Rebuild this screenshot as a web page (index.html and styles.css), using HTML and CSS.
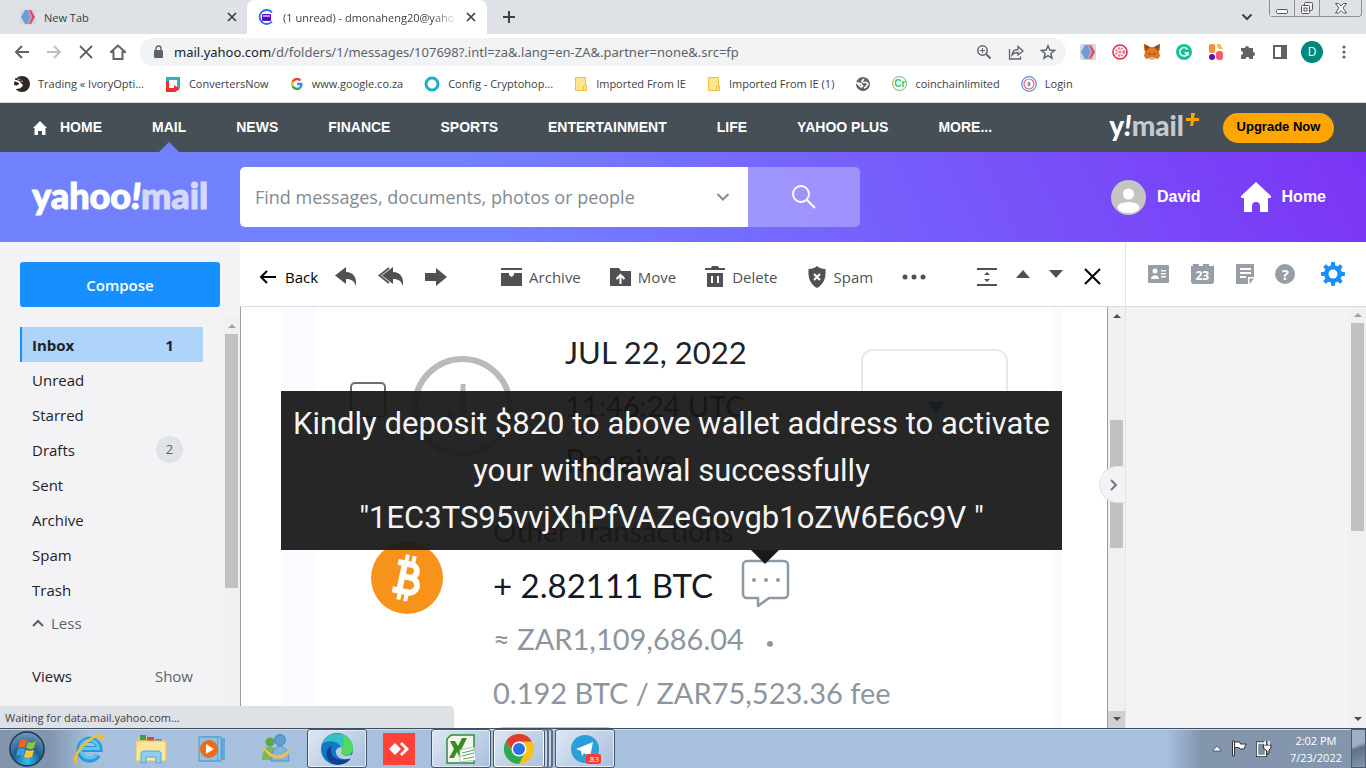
FILE: index.html
```html
<!DOCTYPE html>
<html lang="en">
<head>
  <meta charset="UTF-8" />
  <meta name="viewport" content="width=device-width, initial-scale=1.0"/>
  <title>(1 unread) - Yahoo Mail</title>
  <link rel="stylesheet" href="styles.css">
</head>
<body>

  <!-- Browser tabs -->
  <div class="tab-strip">
    <div class="tab">
      <svg width="16" height="16" viewBox="0 0 16 16"><rect width="16" height="16" rx="2" fill="#d3d8de"/><path d="M5 1h4l3 7-3 7H5L1 8z" fill="#6f9bd1"/><path d="M9 1h2l4 7-4 7H9l3-7z" fill="#e4485c"/><path d="M7 1h2l3 7-3 7H7l3-7z" fill="#b5a0c0"/></svg>
      <span class="tab-title">New Tab</span>
      <button class="plain" aria-label="Close tab"><svg width="10" height="10" viewBox="0 0 10 10"><path d="M1 1l8 8M9 1L1 9" stroke="#3c4043" stroke-width="1.7"/></svg></button>
    </div>
    <div class="tab tab-active">
      <svg width="16" height="16" viewBox="0 0 16 16"><path d="M14 3.500A7 7 0 1 0 14 12.500" fill="none" stroke="#1a73e8" stroke-width="1.800"/><rect x="4" y="5" width="9" height="7" rx="1" fill="#5f01d1"/><path d="M5 7h7" stroke="#fff" stroke-width="1.200"/></svg>
      <span class="tab-title">(1 unread) - dmonaheng20@yaho</span>
      <button class="plain" aria-label="Close tab"><svg width="10" height="10" viewBox="0 0 10 10"><path d="M1 1l8 8M9 1L1 9" stroke="#3c4043" stroke-width="1.7"/></svg></button>
    </div>
    <button class="plain new-tab" aria-label="New tab"><svg width="14" height="14" viewBox="0 0 14 14"><path d="M7 1v12M1 7h12" stroke="#3c4043" stroke-width="2"/></svg></button>
    <button class="plain tab-search" aria-label="Search tabs"><svg width="12" height="8" viewBox="0 0 12 8"><path d="M1.500 1.500L6 6l4.500-4.500" fill="none" stroke="#3c4043" stroke-width="2"/></svg></button>
    <div class="window-buttons">
      <button aria-label="Minimize"><svg width="14" height="14" viewBox="0 0 14 14"><rect x="1.500" y="8.500" width="11" height="4" rx="1" fill="#fff" stroke="#555"/></svg></button>
      <button aria-label="Restore"><svg width="14" height="14" viewBox="0 0 14 14"><rect x="4.500" y="1.500" width="8" height="8" rx="1" fill="#eee" stroke="#555"/><rect x="1.500" y="4.500" width="8" height="8" rx="1" fill="#fff" stroke="#555"/><rect x="4" y="7" width="3" height="3" fill="none" stroke="#555"/></svg></button>
      <button class="win-close" aria-label="Close"><svg width="14" height="14" viewBox="0 0 14 14"><path d="M1.500 2.500h3L7 5l2.500-2.500h3L9 7l3.500 5h-3L7 9.500 4.500 12h-3L5 7z" fill="#fff" stroke="#555"/></svg></button>
    </div>
  </div>

  <!-- Address bar -->
  <div class="toolbar">
    <div class="nav-buttons">
      <button class="plain" aria-label="Back"><svg width="16" height="16" viewBox="0 0 16 16"><path d="M15 8H2M8 2L2 8l6 6" fill="none" stroke="#5f6368" stroke-width="2"/></svg></button>
      <button class="plain" aria-label="Forward"><svg width="16" height="16" viewBox="0 0 16 16"><path d="M1 8h13M8 2l6 6-6 6" fill="none" stroke="#bdc1c6" stroke-width="2"/></svg></button>
      <button class="plain" aria-label="Stop"><svg width="16" height="16" viewBox="0 0 16 16"><path d="M2 2l12 12M14 2L2 14" stroke="#5f6368" stroke-width="1.800"/></svg></button>
      <button class="plain" aria-label="Home"><svg width="16" height="16" viewBox="0 0 16 16"><path d="M8 1.500L1 8h2.500v7h9V8H15z" fill="none" stroke="#5f6368" stroke-width="2"/></svg></button>
    </div>
    <div class="omnibox">
      <svg width="10" height="14" viewBox="0 0 10 14"><rect x="1" y="5" width="9" height="8" rx="1" fill="#5f6368"/><path d="M3 6V3.500a2.500 2.500 0 0 1 5 0V6" fill="none" stroke="#5f6368" stroke-width="1.400"/></svg>
      <span class="url"><b>mail.yahoo.com</b>/d/folders/1/messages/107698?.intl=za&amp;.lang=en-ZA&amp;.partner=none&amp;.src=fp</span>
      <button class="plain" aria-label="Zoom"><svg width="16" height="16" viewBox="0 0 16 16"><circle cx="6.500" cy="6.500" r="4.700" fill="none" stroke="#5f6368" stroke-width="1.500"/><path d="M10 10l4.500 4.500" stroke="#5f6368" stroke-width="1.800"/><path d="M6.500 4v5M4 6.500h5" stroke="#5f6368"/></svg></button>
      <button class="plain" aria-label="Share"><svg width="16" height="16" viewBox="0 0 16 16"><path d="M1.500 5v10h11v-2.500" fill="none" stroke="#5f6368" stroke-width="1.300"/><path d="M4 11c.5-4 2.500-5.500 6-5.500V2.500L15 7l-5 4V8.500C7 8.500 5.500 9 4 11z" fill="none" stroke="#5f6368" stroke-width="1.300"/></svg></button>
      <button class="plain" aria-label="Bookmark"><svg width="16" height="16" viewBox="0 0 16 16"><path d="M8 1.800l1.800 4.300 4.700.4-3.600 3 1.100 4.600L8 11.700 4 14.100l1.100-4.600-3.600-3 4.700-.4z" fill="none" stroke="#5f6368" stroke-width="1.500"/></svg></button>
    </div>
    <div class="extensions">
      <button class="plain" aria-label="Extension"><svg width="16" height="16" viewBox="0 0 16 16"><rect width="16" height="16" rx="2" fill="#d3d8de"/><path d="M5 1h4l3 7-3 7H5L1 8z" fill="#6f9bd1"/><path d="M9 1h2l4 7-4 7H9l3-7z" fill="#e4485c"/><path d="M7 1h2l3 7-3 7H7l3-7z" fill="#b5a0c0"/></svg></button>
      <button class="plain" aria-label="Extension"><svg width="16" height="16" viewBox="0 0 16 16"><circle cx="8" cy="8" r="7" fill="#fff" stroke="#e8264f" stroke-width="1.600"/><circle cx="8" cy="8" r="4" fill="none" stroke="#ef6b86" stroke-width="1.800" stroke-dasharray="2 1.200"/><path d="M8 5v6M5 8h6" stroke="#ef6b86"/></svg></button>
      <button class="plain" aria-label="MetaMask"><svg width="16" height="16" viewBox="0 0 16 16"><path d="M0 0l6 3h4l6-3v5l-1 3 1 4-2 3-3-1-2 2H7l-2-2-3 1-2-3 1-4-1-3z" fill="#e2761b"/><path d="M0 0l6 3-4 4zM16 0l-6 3 4 4z" fill="#8c4a1c"/><path d="M6 13h4l-1 3H7z" fill="#c9c3bd"/><path d="M4 9l3 1-1 1zM12 9l-3 1 1 1z" fill="#2b3a49"/></svg></button>
      <button class="plain" aria-label="Grammarly"><svg width="16" height="16" viewBox="0 0 16 16"><circle cx="8" cy="8" r="8" fill="#15c39a"/><path d="M11.500 5.500A4.200 4.200 0 1 0 12 9H8.500M12 9v2.500" fill="none" stroke="#fff" stroke-width="1.500"/></svg></button>
      <button class="plain" aria-label="Extension"><svg width="16" height="16" viewBox="0 0 16 16"><rect x="1" y="0" width="6" height="9" rx="2" fill="#ff8a3c"/><path d="M9 0h3l3 5h-3a3 3 0 0 1-3-3z" fill="#fdc13c"/><circle cx="4" cy="13" r="3" fill="#5a0fc0"/><rect x="8" y="7" width="7" height="9" rx="3" fill="#f45b69"/></svg></button>
      <button class="plain" aria-label="Extensions"><svg width="16" height="16" viewBox="0 0 16 16"><path d="M1 4h4a2 2 0 1 1 4 0h4v4a2 2 0 1 1 0 4v3H9.500a2 2 0 0 0-4 0H1v-4a2 2 0 0 0 0-4z" fill="#5f6368"/></svg></button>
      <button class="plain" aria-label="Side panel"><svg width="16" height="16" viewBox="0 0 16 16"><rect x="2" y="2" width="12" height="12" fill="#fff" stroke="#5f6368" stroke-width="2"/><rect x="9" y="2" width="5" height="12" fill="#5f6368"/></svg></button>
      <button class="avatar" aria-label="Profile">D</button>
      <button class="plain" aria-label="Menu"><svg width="16" height="16" viewBox="0 0 16 16"><g fill="#5f6368"><circle cx="8" cy="3" r="1.600"/><circle cx="8" cy="8" r="1.600"/><circle cx="8" cy="13" r="1.600"/></g></svg></button>
    </div>
  </div>

  <!-- Bookmarks -->
  <div class="bookmarks">
    <a href="#"><svg width="16" height="16" viewBox="0 0 16 16"><circle cx="8" cy="8" r="8" fill="#33261f"/><path d="M0 3c4-2 8 0 9 3l-4-1 4 4c-1 3-4 4-7 4H0V9c3 1 5 0 5-2L0 5z" fill="#fff"/><path d="M1 3c3-1 6 0 7 2L4 4zM7 12c3 0 5-2 5-5" fill="none" stroke="#33261f"/></svg>Trading « IvoryOpti...</a>
    <a href="#"><svg width="16" height="16" viewBox="0 0 16 16"><path d="M1 1h14v11h-3V4H4v5H1z" fill="#2eb1c2"/><path d="M1 5h3v7h5V9l6 4-5 3H1z" fill="#ee2e31"/></svg>ConvertersNow</a>
    <a href="#"><svg width="14" height="14" viewBox="0 0 16 16" fill="none" stroke-width="2.800"><path d="M12 4A5.500 5.500 0 0 0 3 5.500" stroke="#ea4335"/><path d="M3 5.500a5.500 5.500 0 0 0 0 5" stroke="#fbbc05"/><path d="M3 10.500a5.500 5.500 0 0 0 8.500 1.800" stroke="#34a853"/><path d="M11.500 12.300A5 5 0 0 0 13 8H8" stroke="#4285f4"/></svg>www.google.co.za</a>
    <a href="#"><svg width="16" height="16" viewBox="0 0 16 16"><circle cx="8" cy="8" r="6" fill="none" stroke="#14b1c4" stroke-width="3"/></svg>Config - Cryptohop...</a>
    <a href="#"><svg width="14" height="16" viewBox="0 0 14 16"><path d="M1.500 1.500h10v8h1v5h-11z" fill="#ffe58e" stroke="#e9c044"/><path d="M9.500 14v-4h2" fill="none" stroke="#e9c044"/></svg>Imported From IE</a>
    <a href="#"><svg width="14" height="16" viewBox="0 0 14 16"><path d="M1.500 1.500h10v8h1v5h-11z" fill="#ffe58e" stroke="#e9c044"/><path d="M9.500 14v-4h2" fill="none" stroke="#e9c044"/></svg>Imported From IE (1)</a>
    <a href="#" aria-label="Site"><svg width="16" height="16" viewBox="0 0 16 16"><circle cx="8" cy="8" r="7" fill="#5f6368"/><path d="M2 7l4 .5L7.500 10 6 11zM9 3L7 5l1.500 1.500h3L13 8l-2 3-2 1" fill="none" stroke="#fff" stroke-width="1.600"/></svg></a>
    <a href="#"><span class="badge-cr">Cr</span>coinchainlimited</a>
    <a href="#"><svg width="16" height="16" viewBox="0 0 16 16" fill="none"><circle cx="8" cy="8" r="7.300" stroke="#5f8fca" stroke-width="1.200"/><circle cx="8" cy="8" r="5" stroke="#e4687a" stroke-width="1.200"/><ellipse cx="8" cy="8" rx="1.500" ry="2.500" fill="#6f9bd1"/></svg>Login</a>
  </div>

  <!-- Yahoo network links -->
  <nav class="network-nav">
    <a href="#" class="home-link"><svg width="14" height="14" viewBox="0 0 14 14"><path d="M7 0L0 7h1.500v7H5v-4h4v4h3.500V7H14z" fill="#fff"/></svg>HOME</a>
    <a href="#" class="current">MAIL</a>
    <a href="#">NEWS</a>
    <a href="#">FINANCE</a>
    <a href="#">SPORTS</a>
    <a href="#">ENTERTAINMENT</a>
    <a href="#">LIFE</a>
    <a href="#">YAHOO PLUS</a>
    <a href="#">MORE...</a>
    <div class="mail-plus">y<i>!</i><span>mail</span><svg width="13" height="13" viewBox="0 0 13 13"><path d="M5 0h4L8 5h5v3H8l-1 5H4l1-5H0V5h5z" fill="#ffa700"/></svg></div>
    <button class="upgrade">Upgrade Now</button>
  </nav>

  <!-- Mail header -->
  <header class="mail-header">
    <a href="#" class="logo">yahoo<i>!</i><span>mail</span></a>
    <form class="search">
      <input type="text" aria-label="Search" placeholder="Find messages, documents, photos or people" />
      <button type="button" class="search-options" aria-label="Search options"><svg width="14" height="10" viewBox="0 0 14 10"><path d="M1.500 2L7 7.500 12.500 2" fill="none" stroke="#828a93" stroke-width="2"/></svg></button>
      <button type="submit" class="search-submit" aria-label="Search mail"><svg width="26" height="26" viewBox="0 0 26 26" fill="none" stroke="#fff" stroke-width="2"><circle cx="10" cy="10" r="8"/><path d="M16 16l8 8"/></svg></button>
    </form>
    <a href="#" class="account"><svg width="35" height="35" viewBox="0 0 35 35"><circle cx="17.500" cy="17.500" r="17.500" fill="#c4c4c4"/><circle cx="17.500" cy="14" r="5.500" fill="#fff"/><ellipse cx="17.500" cy="27.500" rx="11" ry="5.500" fill="#fff"/></svg>David</a>
    <a href="#" class="account"><svg width="30" height="30" viewBox="0 0 30 30"><path d="M15 0L0 14v2h3v14h8v-6a4 4 0 0 1 8 0v6h8V16h3v-2z" fill="#fff"/></svg>Home</a>
  </header>

  <main class="mail">

    <!-- Folders -->
    <aside class="sidebar">
      <button class="compose">Compose</button>
      <div class="folder-pane">
        <ul class="folders">
          <li class="selected"><a href="#">Inbox</a><span class="count">1</span></li>
          <li><a href="#">Unread</a></li>
          <li><a href="#">Starred</a></li>
          <li><a href="#">Drafts</a><span class="count bubble">2</span></li>
          <li><a href="#">Sent</a></li>
          <li><a href="#">Archive</a></li>
          <li><a href="#">Spam</a></li>
          <li><a href="#">Trash</a></li>
          <li class="less"><button class="plain"><svg width="12" height="8" viewBox="0 0 12 8"><path d="M1 7l5-5 5 5" fill="none" stroke="#5b636a" stroke-width="2"/></svg>Less</button></li>
          <li class="views">Views<button class="plain">Show</button></li>
        </ul>
        <div class="scrollbar side-scroll"><i class="arrow-up"></i><div class="thumb"></div></div>
      </div>
    </aside>

    <!-- Open message -->
    <section class="reader">
      <div class="actions">
        <button class="plain back"><svg width="18" height="14" viewBox="0 0 18 14"><path d="M17 7H2M8 1L2 7l6 6" fill="none" stroke="#000" stroke-width="2"/></svg>Back</button>
        <button class="plain reply" aria-label="Reply"><svg width="22" height="20" viewBox="0 0 22 20"><path d="M0 8.500L11 0v5c7 0 11 5 10 14-2-5-4-7-10-7v5z" fill="#4f5154"/></svg></button>
        <button class="plain" aria-label="Reply all"><svg width="26" height="20" viewBox="0 0 26 20"><path d="M4 8.500L15 0v5c7 0 11 5 10 14-2-5-4-7-10-7v5z" fill="#4f5154"/><path d="M11 1L1.500 8.500 11 16" fill="none" stroke="#4f5154" stroke-width="1.800"/></svg></button>
        <button class="plain" aria-label="Forward"><svg width="22" height="18" viewBox="0 0 22 18"><path d="M0 5h11V0l11 9-11 9v-5H0z" fill="#4f5154"/></svg></button>
        <div class="label-actions">
          <button class="plain"><svg width="21" height="20" viewBox="0 0 21 20" fill="#4f5154"><path d="M0 1h21v2H0zM0 6h8v2l2.500 2L13 8V6h8v13H0z"/></svg>Archive</button>
          <button class="plain"><svg width="21" height="20" viewBox="0 0 21 20"><path d="M0 1h9l2 3h10v15H0z" fill="#4f5154"/><path d="M10.500 17V8.500M6.500 12l4-4 4 4" fill="none" stroke="#fff" stroke-width="2"/></svg>Move</button>
          <button class="plain"><svg width="20" height="21" viewBox="0 0 20 21" fill="#4f5154"><path d="M0 2h6l1-2h6l1 2h6v2H0zM2 7h16v14H2z"/><path d="M7 10v7M13 10v7" stroke="#fff" stroke-width="2"/></svg>Delete</button>
          <button class="plain"><svg width="20" height="22" viewBox="0 0 20 22"><path d="M10 0c2 2 5 3 8.500 3C19 12 17 18 10 22 3 18 1 12 1.500 3 5 3 8 2 10 0z" fill="#4f5154"/><path d="M7 8l6 6M13 8l-6 6" stroke="#fff" stroke-width="2"/></svg>Spam</button>
          <button class="plain" aria-label="More"><svg width="24" height="6" viewBox="0 0 24 6" fill="#4f5154"><circle cx="3" cy="3" r="2.500"/><circle cx="12" cy="3" r="2.500"/><circle cx="21" cy="3" r="2.500"/></svg></button>
        </div>
        <div class="view-actions">
          <button class="plain" aria-label="Fit"><svg width="20" height="20" viewBox="0 0 20 20" fill="#4f5154"><path d="M0 1h20v2H0zM0 17h20v2H0zM10 5l3 3H7zM10 15l3-3H7z"/></svg></button>
          <button class="plain prev" aria-label="Previous"><svg width="14" height="8" viewBox="0 0 14 8"><path d="M7 0l7 8H0z" fill="#4f5154"/></svg></button>
          <button class="plain next" aria-label="Next"><svg width="14" height="8" viewBox="0 0 14 8"><path d="M7 8l7-8H0z" fill="#4f5154"/></svg></button>
          <button class="plain close" aria-label="Close"><svg width="17" height="17" viewBox="0 0 17 17"><path d="M1 1l15 15M16 1L1 16" stroke="#000" stroke-width="2"/></svg></button>
        </div>
      </div>

      <div class="message">
        <div class="message-body">
          <div class="receipt">
            <div class="receipt-top">
              <input type="checkbox" class="pick" aria-label="Select transaction" />
              <div class="receive-icon"><svg width="60" height="60" viewBox="0 0 60 60"><path d="M30 7v44M14 35l16 16 16-16" fill="none" stroke="#bababa" stroke-width="5"/></svg></div>
              <div class="when">
                <div class="date">JUL 22, 2022</div>
                <div class="time">11:46:24 UTC</div>
                <div class="kind">Receive</div>
              </div>
              <button class="expand" aria-label="Details"><svg width="18" height="12" viewBox="0 0 18 12"><path d="M0 0h18L9 12z" fill="#1a73e8"/></svg></button>
            </div>
            <div class="receipt-main">
              <svg class="coin" width="72" height="72" viewBox="0 0 72 72"><circle cx="36" cy="36" r="36" fill="#f7931a"/><g transform="rotate(12 36 36)" fill="none" stroke="#fff"><path d="M31 20v32M24 22h14a6.500 6.500 0 0 1 0 13H32M32 35h8a7.500 7.500 0 0 1 0 15H24" stroke-width="6"/><path d="M32 13v8M39 13v8M32 51v8M39 51v8" stroke-width="4"/></g></svg>
              <div class="amounts">
                <div>Other Transactions</div>
                <div class="total">+ 2.82111 BTC
                  <svg width="50" height="48" viewBox="0 0 50 48"><path d="M6 2h37a4 4 0 0 1 4 4v29a4 4 0 0 1-4 4H28l-11 8v-8H6a4 4 0 0 1-4-4V6a4 4 0 0 1 4-4z" fill="#fff" stroke="#8d9aa5" stroke-width="2.500"/><g fill="#8d9aa5"><circle cx="13" cy="21" r="2"/><circle cx="25" cy="21" r="2"/><circle cx="37" cy="21" r="2"/></g></svg>
                </div>
                <div class="muted">≈ ZAR1,109,686.04 <span class="dot">•</span></div>
                <div class="muted">0.192 BTC / ZAR75,523.36 fee</div>
                <div class="confirm-bar"></div>
              </div>
            </div>
            <div class="tooltip">Kindly deposit $820 to above wallet address to activate your withdrawal successfully<br/>"1EC3TS95vvjXhPfVAZeGovgb1oZW6E6c9V "</div>
          </div>
        </div>
        <div class="scrollbar message-scroll"><i class="arrow-up"></i><div class="thumb"></div><i class="arrow-down"></i></div>
        <button class="rail-toggle" aria-label="Toggle side panel"><svg width="8" height="12" viewBox="0 0 8 12"><path d="M1 1l5 5-5 5" fill="none" stroke="#6e7780" stroke-width="2"/></svg></button>
      </div>
    </section>

    <!-- Right rail -->
    <aside class="rail">
      <div class="rail-icons">
        <button class="plain" aria-label="Contacts"><svg width="21" height="18" viewBox="0 0 21 18"><rect width="21" height="18" rx="1" fill="#979ea8"/><circle cx="7" cy="6" r="2.500" fill="#fff"/><path d="M3 14c0-5 8-5 8 0zM13 5h5v1.500h-5zM13 8h5v1.500h-5zM13 11h5v1.500h-5z" fill="#fff"/></svg></button>
        <button class="calendar" aria-label="Calendar">23</button>
        <button class="plain" aria-label="Notepad"><svg width="18" height="20" viewBox="0 0 18 20"><path d="M0 0h18v13h-6v7H0zM13.500 14.500H18L13.500 20z" fill="#979ea8"/><path d="M4 5h11M4 9h11M4 13h6" stroke="#fff" stroke-width="2"/></svg></button>
        <button class="help" aria-label="Help">?</button>
        <button class="plain settings" aria-label="Settings"><svg width="24" height="24" viewBox="-12 -12 24 24"><circle r="6.500" fill="none" stroke="#188fff" stroke-width="5"/><g fill="#188fff"><rect x="-2" y="-12" width="4" height="24" rx="1"/><rect x="-2" y="-12" width="4" height="24" rx="1" transform="rotate(45)"/><rect x="-2" y="-12" width="4" height="24" rx="1" transform="rotate(90)"/><rect x="-2" y="-12" width="4" height="24" rx="1" transform="rotate(135)"/></g><circle r="4.500" fill="#fff"/></svg></button>
      </div>
      <div class="rail-body">
        <div class="scrollbar rail-scroll"><i class="arrow-up"></i><div class="thumb"></div><i class="arrow-down"></i></div>
      </div>
    </aside>

    <div class="status">Waiting for data.mail.yahoo.com...</div>
  </main>

  <!-- Windows taskbar -->
  <footer class="taskbar">
    <button class="start" aria-label="Start"><svg width="36" height="36" viewBox="0 0 36 36"><defs><radialGradient id="orb" cx="50%" cy="85%" r="80%"><stop offset="0" stop-color="#35c4f0"/><stop offset=".5" stop-color="#1f5f92"/><stop offset="1" stop-color="#6f93b0"/></radialGradient></defs><circle cx="18" cy="18" r="17" fill="url(#orb)" stroke="#173a5a" stroke-width="1.500"/><path d="M11 10c3-2 5-1 7 0l-2 7c-2-1-4-1-7 0z" fill="#f0622a"/><path d="M19 11c3 1 5 1 8-1l-2 7c-3 2-5 1-8 0z" fill="#8cc63f"/><path d="M9 18c3-1 5-1 7 0l-2 7c-2-1-4-2-7 0z" fill="#3fa0e8"/><path d="M17 19c3 1 5 1 8 0l-2 7c-3 1-5 1-8 0z" fill="#fcc72c"/></svg></button>
    <button class="task" aria-label="Internet Explorer"><svg width="32" height="32" viewBox="0 0 32 32" fill="none"><path d="M25 22a10 10 0 1 1 1.500-6H9" stroke="#2c98dc" stroke-width="6"/><path d="M24 21a9 9 0 1 1 1.500-5.500H9" stroke="#5cc5f5" stroke-width="3"/><path d="M4 30C-1 27 6 15 15 8S31 0 29 8" stroke="#f6c21c" stroke-width="2.500"/></svg></button>
    <button class="task" aria-label="Explorer"><svg width="34" height="32" viewBox="0 0 34 32"><path d="M3 4h10l2 2h16v22H3z" fill="#e9c766"/><path d="M6 2h6v5H6z" fill="#3aa04a"/><path d="M13 4h7v4h-7z" fill="#d9473c"/><path d="M21 6h7v4h-7z" fill="#3f8fd6"/><path d="M2 8h30v20H2z" fill="#f9e5a0" stroke="#dfc069"/><path d="M7 30v-9a3 3 0 0 1 3-3h14a3 3 0 0 1 3 3v9h-5v-6H12v6z" fill="#8ccdf0" stroke="#5ba7d4"/></svg></button>
    <button class="task" aria-label="Media Player"><svg width="30" height="28" viewBox="0 0 30 28"><rect x="8" y="3" width="19" height="22" fill="#5fa9d6"/><rect x="5" y="2" width="18" height="24" fill="#9bd0ec" stroke="#4d97c6"/><rect x="1" y="2" width="19" height="24" fill="#8cc3e4" stroke="#4d97c6"/><circle cx="11" cy="14" r="9" fill="#f06a15"/><path d="M8 9l8 5-8 5z" fill="#fff"/></svg></button>
    <button class="task" aria-label="Messenger"><svg width="32" height="30" viewBox="0 0 32 30"><circle cx="11" cy="8" r="4.500" fill="#5aa846"/><path d="M3 26c0-18 16-18 16 0z" fill="#76b955"/><circle cx="21" cy="6" r="5.500" fill="#5f9ed0" stroke="#3f7fb4" stroke-width=".8"/><path d="M12 27c0-20 18-20 18 0z" fill="#7fb5dc" stroke="#4d8cbd" stroke-width=".8"/><path d="M0 13c8-1 9 7 17 8 6 1 10-2 14-7-1 9-8 12-16 10C7 22 7 15 0 13z" fill="#f4bd4f"/></svg></button>
    <button class="task open" aria-label="Edge"><svg width="34" height="34" viewBox="0 0 34 34"><circle cx="17" cy="17" r="16" fill="#1276c9"/><path d="M2 12C6-2 29-3 33 15c1 6-4 9-10 8-4-1-2-3-2-6 0-8-14-10-19-5z" fill="#35c1c6"/><path d="M22 2c8 3 11 9 11 14 0 5-5 8-10 7-4-1-2-3-2-6 3-4 4-9 1-15z" fill="#55d862"/><path d="M12 14c-4 8 3 18 19 12-4 7-15 9-21 4-6-6-4-14 2-16z" fill="#123f8c"/><path d="M21 15c2 4-2 6 2 8 3 1 6 1 8-1l1 4c-9 3-15 0-16-5-1-3 2-6 5-6z" fill="#b7cde8"/></svg></button>
    <button class="task" aria-label="AnyDesk"><svg width="32" height="32" viewBox="0 0 32 32"><rect width="32" height="32" fill="#fe4238"/><path d="M12 10l6 6-6 6-6-6z" fill="#fff"/><path d="M17 11l2-2 7 7-7 7-2-2 5-5z" fill="#fff"/></svg></button>
    <button class="task open" aria-label="Excel"><svg width="32" height="32" viewBox="0 0 32 32"><path d="M6 2h23v28H2V6z" fill="#eef7ea" stroke="#2f8c3c" stroke-width="1.500"/><path d="M5 8h5l3 5 4-8h5l-6 12 4 8h-5l-3-6-3 6H4l5-9z" fill="#3c8a20"/><path d="M15 17l14-3 2 13-16 2z" fill="#fff" stroke="#b5c5b5"/><path d="M17 20l12-3M17 23l12-3M18 26l11-2" stroke="#58a05e"/></svg></button>
    <button class="task open stacked" aria-label="Chrome"><svg width="30" height="30" viewBox="0 0 30 30"><circle cx="15" cy="15" r="15" fill="#fbc116"/><path d="M2 7.500A15 15 0 0 1 28 7.500H15L9 18z" fill="#e33b2e"/><path d="M2 7.500A15 15 0 0 0 15 30l6-11.500H9z" fill="#2da94f"/><circle cx="15" cy="15" r="7.500" fill="#fff"/><circle cx="15" cy="15" r="6" fill="#2a72e8"/></svg></button>
    <button class="task open" aria-label="Telegram"><svg width="28" height="28" viewBox="0 0 28 28"><circle cx="14" cy="14" r="14" fill="#2b9fd9"/><path d="M5 14l17-7-3 15-6-4-2 3-1-5z" fill="#fff"/></svg><span class="unread">.83</span></button>
    <div class="tray">
      <svg width="10" height="6" viewBox="0 0 10 6"><path d="M5 0l4.500 5h-9z" fill="#fff" stroke="#4d5d70"/></svg>
      <svg width="16" height="17" viewBox="0 0 16 17"><path d="M1.500 1h2v15h-2z" fill="#fff" stroke="#333"/><path d="M3.500 2h5l1 2h5.500l-2 5H9L8 7.500H3.500z" fill="#fff" stroke="#333"/></svg>
      <svg width="16" height="17" viewBox="0 0 16 17"><path d="M1.500 3h8v12.500h-8z" fill="none" stroke="#222" stroke-width="3"/><path d="M1.500 3h8v12.500h-8z" fill="#7b8ba0" stroke="#fff" stroke-width="1.500"/><path d="M7 5h8v3l-2 2v3l-2 2V11l-3-2z" fill="#fff" stroke="#222"/><path d="M9 1v4M13 1v4" stroke="#fff" stroke-width="1.500"/></svg>
      <div class="clock">2:02 PM<br/>7/23/2022</div>
      <button class="show-desktop" aria-label="Show desktop"></button>
    </div>
  </footer>

</body>
</html>
```
FILE: styles.css
```css
* {
  box-sizing: border-box;
}

body {
  margin: 0;
  height: 100vh;
  display: flex;
  flex-direction: column;
  overflow: hidden;
  font-family: "Open Sans", "Noto Sans", sans-serif;
  font-size: 15px;
  color: #1d2228;
  background: #fff;
}

a {
  color: inherit;
  text-decoration: none;
}

button {
  font: inherit;
  color: inherit;
  cursor: pointer;
}

svg {
  display: block;
  flex: none;
}

.plain {
  display: flex;
  align-items: center;
  padding: 0;
  border: none;
  background: none;
}

/* Browser tabs */
.tab-strip {
  display: flex;
  align-items: center;
  height: 34px;
  flex: none;
  background: #dee1e6;
  font-size: 11px;
  color: #3c4043;
}

.tab {
  display: flex;
  align-items: center;
  gap: 8px;
  width: 247px;
  height: 34px;
  padding: 0 10px 0 20px;
}

.tab-active {
  width: 240px;
  padding: 0 11px;
  background: #fff;
  border-radius: 8px 8px 0 0;
}

.tab-title {
  flex: 1;
  overflow: hidden;
  white-space: nowrap;
}

.tab-active .tab-title {
  margin-left: 1px;
  -webkit-mask-image: linear-gradient(to right, #000 85%, transparent);
  mask-image: linear-gradient(to right, #000 85%, transparent);
}

.new-tab {
  margin-left: 15px;
}

.tab-search {
  margin-left: auto;
}

.window-buttons {
  display: flex;
  align-self: flex-start;
  height: 17px;
  margin: 0 4px 0 16px;
  border: 1px solid #8b8e93;
  border-top: none;
  border-radius: 0 0 4px 4px;
}

.window-buttons button {
  display: flex;
  align-items: center;
  justify-content: center;
  width: 25px;
  padding: 0;
  border: none;
  border-right: 1px solid #8b8e93;
  background: #dee1e6;
}

.window-buttons .win-close {
  width: 41px;
  border-right: none;
  border-radius: 0 0 4px 0;
}

/* Address bar */
.toolbar {
  display: flex;
  align-items: center;
  height: 36px;
  flex: none;
  padding: 0 14px;
}

.nav-buttons {
  display: flex;
  gap: 16px;
}

.omnibox {
  flex: 1;
  display: flex;
  align-items: center;
  gap: 16px;
  height: 28px;
  margin: 0 14px;
  padding: 0 10px 0 13px;
  border-radius: 14px;
  background: #f1f3f4;
  font-family: "Noto Sans", "Open Sans", sans-serif;
  font-size: 13px;
  color: #5f6368;
}

.url {
  flex: 1;
  margin-left: -5px;
  white-space: nowrap;
}

.url b {
  font-weight: normal;
  color: #202124;
}

.extensions {
  display: flex;
  align-items: center;
  gap: 16px;
}

.avatar {
  width: 22px;
  height: 22px;
  margin: 0 -3px;
  padding: 0;
  border: none;
  border-radius: 50%;
  background: #00897b;
  color: #fff;
  font-size: 12px;
  line-height: 22px;
}

/* Bookmarks */
.bookmarks {
  display: flex;
  gap: 21px;
  height: 33px;
  flex: none;
  padding: 0 14px 5px;
  border-bottom: 1px solid #d5d8dc;
  font-size: 11px;
  color: #3c4043;
}

.bookmarks a {
  display: flex;
  align-items: center;
  gap: 8px;
  white-space: nowrap;
}

.badge-cr {
  width: 15px;
  height: 15px;
  border: 1px solid #6fae84;
  border-radius: 50%;
  font: bold 10px/13px "Liberation Sans", sans-serif;
  text-align: center;
  color: #1fd050;
}

/* Network links */
.network-nav {
  display: flex;
  align-items: center;
  gap: 50px;
  height: 49px;
  flex: none;
  padding: 0 32px 0 33px;
  background: #464e56;
  font: bold 14px "Liberation Sans", Arial, sans-serif;
  color: #fff;
  white-space: nowrap;
}

.network-nav a {
  line-height: 49px;
}

.home-link {
  display: flex;
  align-items: center;
  gap: 13px;
}

.current {
  position: relative;
}

.current::after {
  content: "";
  position: absolute;
  left: 50%;
  bottom: 0;
  margin-left: -10px;
  border: 10px solid transparent;
  border-top: none;
  border-bottom-color: #7180fd;
}

.mail-plus {
  display: flex;
  margin: 0 0 6px auto;
  font: 900 28px/30px Lato, sans-serif;
}

.mail-plus span {
  margin-right: 2px;
  color: #c7cacd;
}

.mail-plus svg {
  margin-top: 3px;
}

.upgrade {
  width: 111px;
  height: 30px;
  margin-left: -26px;
  padding: 0 0 2px;
  border: none;
  border-radius: 15px;
  background: #ffa700;
  color: #000;
  font-size: 13px;
}

/* Mail header */
.mail-header {
  display: flex;
  align-items: center;
  height: 90px;
  flex: none;
  padding: 0 40px 0 32px;
  background: linear-gradient(65deg, #7282ff 35%, #7b33f5);
  font: bold 16px "Liberation Sans", Arial, sans-serif;
  color: #fff;
}

.logo {
  width: 208px;
  margin-bottom: 4px;
  font: 900 36px/40px Lato, sans-serif;
  -webkit-text-stroke: 1px currentColor;
}

.logo span {
  color: #d5d9ff;
}

.search {
  display: flex;
  width: 620px;
  height: 60px;
  margin-right: auto;
  border-radius: 5px;
  overflow: hidden;
}

.search input {
  flex: 1;
  min-width: 0;
  padding: 0 15px;
  border: none;
  background: #fff;
  font: 18px "Open Sans", "Noto Sans", sans-serif;
}

.search input::placeholder {
  color: #828a93;
}

.search-options {
  width: 50px;
  display: flex;
  align-items: center;
  justify-content: center;
  border: none;
  background: #fff;
}

.search-submit {
  display: flex;
  align-items: center;
  justify-content: center;
  width: 112px;
  border: none;
  background: rgba(255, 255, 255, 0.3);
}

.account {
  display: flex;
  align-items: center;
  gap: 11px;
  margin-left: 40px;
}

/* Mail layout */
.mail {
  position: relative;
  display: flex;
  flex: 1;
  min-height: 0;
}

/* Scrollbars */
.scrollbar {
  display: flex;
  flex-direction: column;
  align-items: center;
  width: 17px;
  background: #f0f0f0;
}

.scrollbar .thumb {
  width: 13px;
  background: #c1c1c1;
}

.arrow-up,
.arrow-down {
  border: 4px solid transparent;
}

.arrow-up {
  margin: 7px 0;
  border-top: none;
  border-bottom-color: #505050;
}

.arrow-down {
  margin: 7px 0;
  border-bottom: none;
  border-top-color: #505050;
}

/* Sidebar */
.sidebar {
  display: flex;
  flex-direction: column;
  width: 240px;
  flex: none;
  padding-top: 20px;
  background: #f3f3f6;
}

.compose {
  height: 45px;
  flex: none;
  margin: 0 20px;
  border: none;
  border-radius: 3px;
  background: #188fff;
  color: #fff;
  font-weight: 600;
}

.folder-pane {
  display: flex;
  flex: 1;
  min-height: 0;
  justify-content: space-between;
  padding: 11px 0 0 20px;
}

.folders {
  width: 183px;
  margin: 9px 0 0;
  padding: 0;
  list-style: none;
}

.folders li {
  display: flex;
  align-items: center;
  justify-content: space-between;
  height: 35px;
  padding: 0 20px 0 12px;
}

.folders .selected {
  padding-left: 10px;
  border-left: 2px solid #188fff;
  background: #aed4fb;
  font-weight: bold;
}

.count {
  width: 27px;
  text-align: center;
}

.count.bubble {
  height: 27px;
  border-radius: 50%;
  background: #e0e4e9;
  color: #5b636a;
  font-size: 13px;
  line-height: 27px;
}

.folders .less {
  color: #5b636a;
  height: 32px;
}

.less .plain {
  gap: 7px;
}

.folders .views {
  height: 40px;
  margin-top: 17px;
  padding-right: 10px;
}

.views .plain {
  color: #5b636a;
}

.side-scroll .arrow-up {
  border-bottom-color: #a3a3a3;
  margin: 6px 0;
}

.side-scroll .thumb {
  height: 254px;
}

/* Reader */
.reader {
  display: flex;
  flex-direction: column;
  flex: 1;
  min-width: 0;
}

.actions {
  display: flex;
  align-items: center;
  gap: 21px;
  height: 65px;
  flex: none;
  padding: 5px 24px 0 19px;
  border-bottom: 1px solid #d8dce3;
  color: #4f5154;
}

.back {
  gap: 8px;
  color: #000;
}

.reply {
  margin-left: -4px;
}

.label-actions {
  display: flex;
  gap: 29px;
  margin-left: 33px;
}

.label-actions .plain {
  gap: 7px;
}

.view-actions {
  display: flex;
  align-items: center;
  gap: 19px;
  margin-left: auto;
}

.prev,
.next {
  height: 14px;
  align-items: flex-start;
}

.close {
  margin-left: 2px;
}

.message {
  position: relative;
  display: flex;
  flex: 1;
  min-height: 0;
}

.message-body {
  flex: 1;
  min-width: 0;
  padding: 0 40px;
  border: 1px solid #989da8;
  border-width: 0 1px;
  overflow: hidden;
}

.message-scroll {
  background: linear-gradient(to top, #d0d0d0 17px, #f0f0f0 17px);
}

.message-scroll .thumb {
  height: 128px;
  margin: 95px 0 auto;
}

.rail-toggle {
  position: absolute;
  right: 0;
  top: 159px;
  width: 26px;
  height: 37px;
  padding: 0 0 0 10px;
  border: 1px solid #e0e4e9;
  border-right: none;
  border-radius: 19px 0 0 19px;
  background: #f3f3f5;
}

/* Transaction receipt */
.receipt {
  position: relative;
  max-width: 781px;
  height: 500px;
  padding: 18px 54px 0 69px;
  background: linear-gradient(to right, #fafbff 34px, #fff 34px calc(100% - 9px), #fafbff calc(100% - 9px));
  font-family: Lato, sans-serif;
  font-size: 29px;
  line-height: 54px;
}

.receipt-top {
  display: flex;
  align-items: flex-start;
}

.pick {
  appearance: none;
  width: 36px;
  height: 36px;
  margin: 57px 26px 0 0;
  border: 2px solid #6f6f6f;
  border-radius: 5px;
}

.receive-icon {
  display: flex;
  align-items: center;
  justify-content: center;
  width: 101px;
  height: 101px;
  margin: 31px 52px 0 0;
  border: 6px solid #bababa;
  border-radius: 50%;
}

.date {
  font-size: 31px;
}

.kind {
  font-size: 33px;
}

.time,
.kind {
  color: #000;
}

.expand {
  width: 147px;
  height: 117px;
  margin: 24px 0 0 auto;
  padding: 0 64px;
  border: 2px solid #e8e8e8;
  border-radius: 12px;
  background: none;
}

.receipt-main {
  display: flex;
  gap: 50px;
  margin: 17px 0 0 21px;
}

.coin {
  margin-top: 38px;
}

.amounts {
  white-space: nowrap;
}

.muted {
  height: 54px;
  color: #8d969e;
}

.total {
  display: flex;
  align-items: center;
  gap: 28px;
  height: 54px;
  font-size: 33px;
  color: #15182b;
}

.total svg {
  margin-bottom: 4px;
}

.dot {
  margin-left: 14px;
  font-size: 16px;
  line-height: 16px;
  vertical-align: middle;
}

.confirm-bar {
  width: 116px;
  height: 40px;
  margin: 7px 4px;
  border-radius: 6px;
  background: #8fdcf2;
}

.tooltip {
  position: absolute;
  left: 0;
  right: 0;
  top: 84px;
  padding: 9px 5px;
  background: rgba(24, 24, 24, 0.94);
  color: #f4f4f4;
  font: 31px/47px Roboto, sans-serif;
  text-align: center;
}

.tooltip::after {
  content: "";
  position: absolute;
  left: 470px;
  top: 100%;
  border: 14px solid transparent;
  border-bottom: none;
  border-top-color: #1a1a1a;
}

/* Right rail */
.rail {
  display: flex;
  flex-direction: column;
  width: 241px;
  flex: none;
  border-left: 1px solid #e0e4e9;
}

.rail-icons {
  display: flex;
  align-items: center;
  justify-content: space-between;
  height: 65px;
  flex: none;
  padding: 0 21px 0 22px;
  border-bottom: 1px solid #d8dce3;
}

.calendar {
  width: 23px;
  height: 20px;
  padding: 0;
  border: none;
  border-top: 2px dashed #979ea8;
  border-radius: 2px;
  background: #979ea8;
  background-clip: padding-box;
  color: #fff;
  font-size: 12px;
  font-weight: bold;
  line-height: 17px;
}

.help {
  width: 20px;
  height: 20px;
  padding: 0;
  border: none;
  border-radius: 50%;
  background: #979ea8;
  color: #fff;
  font-weight: bold;
  line-height: 20px;
}

.settings {
  margin-left: 4px;
}

.rail-body {
  display: flex;
  flex: 1;
  justify-content: flex-end;
  background: #f3f3f5;
}

.rail-scroll .arrow-up {
  margin: 6px 0;
  border-bottom-color: #a3a3a3;
}

.rail-scroll .thumb {
  height: 208px;
  margin-bottom: auto;
}

/* Status bubble */
.status {
  position: absolute;
  left: 0;
  bottom: 0;
  width: 454px;
  height: 22px;
  padding-left: 5px;
  border-radius: 0 4px 0 0;
  background: #dee1e6;
  color: #3c4043;
  font-size: 11px;
  line-height: 24px;
}

/* Taskbar */
.taskbar {
  display: flex;
  align-items: center;
  gap: 2px;
  height: 40px;
  flex: none;
  border-top: 1px solid #3d5060;
  background: linear-gradient(to right, #8295ad 50px, #a6c0de 90px calc(100% - 200px), #8496ae calc(100% - 165px));
  box-shadow: inset 0 1px #cadcee;
}

.start {
  width: 57px;
  height: 38px;
  padding: 0 0 0 9px;
  border: none;
  background: none;
}

.task {
  position: relative;
  display: flex;
  align-items: center;
  justify-content: center;
  width: 60px;
  height: 39px;
  padding: 0;
  border: 1px solid transparent;
  border-radius: 3px;
  background: none;
}

.task.open {
  border-color: #45566b;
  background: linear-gradient(135deg, #dde7f3, #a9c0dc);
  box-shadow: inset 0 0 0 1px #e3edf7;
}

.task.stacked {
  width: 52px;
  margin-right: 8px;
  box-shadow: inset 0 0 0 1px #fff, 3px 0 0 -1px #c5d5e8, 4px 0 #5c6f85, 7px 0 0 -1px #c5d5e8, 8px 0 #5c6f85;
}

.unread {
  position: absolute;
  right: 13px;
  bottom: 3px;
  padding: 0 2px;
  border-radius: 2px;
  background: #f23c34;
  color: #fff;
  font-size: 8px;
  line-height: 10px;
}

.tray {
  display: flex;
  align-items: center;
  gap: 9px;
  height: 39px;
  margin-left: auto;
  color: #fff;
}

.clock {
  margin: 0 0 0 9px;
  font-size: 11px;
  line-height: 17px;
  text-align: center;
}

.show-desktop {
  width: 15px;
  height: 39px;
  padding: 0;
  border: 1px solid #4c5c70;
  background: linear-gradient(160deg, #9fafc2 40%, #5f7087 50%, #8496ae);
}
```
